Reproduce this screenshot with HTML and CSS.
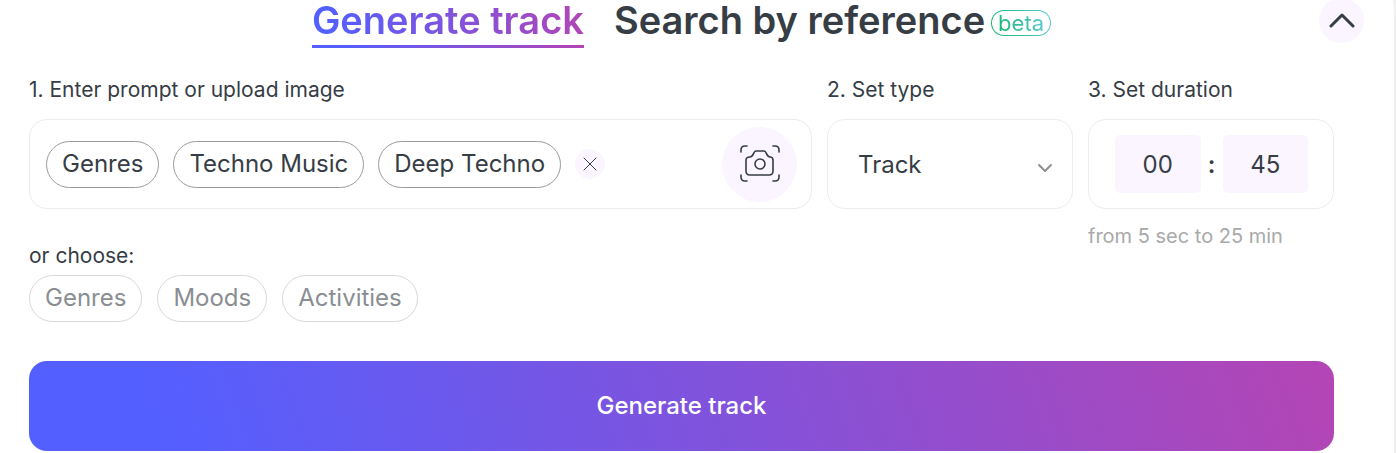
FILE: index.html
```
<!DOCTYPE html>
<html lang="en">
<head>
    <meta charset="UTF-8">
    <meta name="viewport" content="width=device-width, initial-scale=1.0">
    <title>Generate track</title>
    <link rel="stylesheet" href="styles.css">
</head>
<body>
    <main class="panel">
        <nav class="tabs">
            <a href="#generate" class="tab active">Generate track</a>
            <a href="#search" class="tab">Search by reference</a>
            <span class="beta"><span>beta</span></span>
        </nav>
        <button type="button" class="collapse" aria-label="Collapse">
            <svg width="26" height="18" viewBox="0 0 26 18"><path d="M2 14 13 3l11 11"/></svg>
        </button>

        <form>
            <div class="fields">
                <section class="field">
                    <h2 class="label">1. Enter prompt or upload image</h2>
                    <div class="box prompt">
                        <button type="button" class="chip">Genres</button>
                        <button type="button" class="chip">Techno Music</button>
                        <button type="button" class="chip">Deep Techno</button>
                        <button type="button" class="clear" aria-label="Clear">
                            <svg width="14" height="14" viewBox="0 0 14 14"><path d="M1 1l12 12M13 1 1 13"/></svg>
                        </button>
                        <button type="button" class="upload" aria-label="Upload image">
                            <svg width="40" height="38" viewBox="0 0 40 38">
                                <path d="M1 7V5q0-4 4-4h2M33 1h2q4 0 4 4v2M39 30v2q0 4-4 4h-2M7 36H5q-4 0-4-4v-2"/>
                                <path d="M10 12c4 0 3-6 6-6h8c3 0 2 6 6 6q3 0 3 3v11q0 4-4 4H10q-4 0-4-4V15q0-3 4-3z"/>
                                <circle cx="20" cy="19" r="5"/>
                            </svg>
                        </button>
                    </div>
                </section>

                <section class="field">
                    <label class="label" for="type">2. Set type</label>
                    <div class="box type">
                        <select id="type">
                            <option>Track</option>
                            <option>Loop</option>
                        </select>
                        <svg width="16" height="10" viewBox="0 0 16 10"><path d="M2 2l6 6 6-6"/></svg>
                    </div>
                </section>

                <section class="field">
                    <label class="label" for="minutes">3. Set duration</label>
                    <div class="box duration">
                        <input type="text" id="minutes" value="00">
                        <span class="colon">:</span>
                        <input type="text" id="seconds" value="45" aria-label="Seconds">
                    </div>
                </section>
            </div>

            <div class="extra">
                <div>
                    <p class="label choose">or choose:</p>
                    <div class="choices">
                        <button type="button" class="chip muted">Genres</button>
                        <button type="button" class="chip muted">Moods</button>
                        <button type="button" class="chip muted">Activities</button>
                    </div>
                </div>
                <p class="hint">from 5 sec to 25 min</p>
            </div>

            <button type="submit" class="submit">Generate track</button>
        </form>
    </main>
</body>
</html>
```
FILE: styles.css
```
* {
    box-sizing: border-box;
}
body {
    margin: 0;
    background: #f1f1f1;
    color: #363d45;
    font-family: Inter, "Liberation Sans", sans-serif;
    font-size: 24px;
}
button, input, select {
    font: inherit;
    color: inherit;
    margin: 0;
    padding: 0;
    border: 0;
}
svg {
    display: block;
    fill: none;
    stroke: #363d45;
    stroke-width: 2;
    stroke-linecap: round;
    stroke-linejoin: round;
}
.panel {
    position: relative;
    margin-right: 2px;
    padding: 0 60px 2px 29px;
    min-height: 100vh;
    background: #fff;
    border-top-right-radius: 2px 14px;
}
.tabs {
    display: flex;
    justify-content: center;
    align-items: flex-start;
    height: 48px;
}
.tab {
    height: 48px;
    margin-right: 30px;
    color: #363d45;
    font-size: 38px;
    font-weight: 600;
    line-height: 40px;
    text-decoration: none;
    white-space: nowrap;
}
.tab.active {
    color: transparent;
    background:
        linear-gradient(70deg, #535fff 10%, #b445b4) bottom / 100% 3px no-repeat,
        linear-gradient(70deg, #535fff 10%, #b445b4) text;
}
.tab:nth-child(2) {
    margin-right: 6px;
}
.beta {
    margin-top: 10px;
    padding: 0 6px;
    border: 1px solid transparent;
    border-radius: 13px;
    background:
        linear-gradient(#fff, #fff) padding-box,
        linear-gradient(70deg, #12b76a, #5cc8dc) border-box;
    font-size: 22px;
    line-height: 24px;
}
.beta span {
    color: transparent;
    background: linear-gradient(70deg, #12b76a, #5cc8dc) text;
}
.collapse {
    position: absolute;
    top: -2px;
    right: 30px;
    display: grid;
    place-items: center;
    width: 45px;
    height: 45px;
    border-radius: 50%;
    background: #faf5ff;
}
.collapse svg {
    stroke-width: 3;
}
.fields {
    display: grid;
    grid-template-columns: 1fr 246px 246px;
    gap: 15px;
    padding-top: 29px;
}
.label {
    display: block;
    margin: 0 0 17px;
    font-size: 21px;
    font-weight: 400;
    line-height: 25px;
}
.box {
    display: flex;
    align-items: center;
    height: 90px;
    border: 1px solid #ececec;
    border-radius: 18px;
}
.prompt {
    gap: 14px;
    padding: 0 14px 0 16px;
}
.chip {
    height: 47px;
    padding: 0 15px 2px;
    border: 1px solid #9b9b9b;
    border-radius: 24px;
    background: #fff;
    white-space: nowrap;
}
.chip.muted {
    color: #8a8e93;
    border-color: #d8d8d8;
}
.clear, .upload {
    display: grid;
    place-items: center;
    width: 30px;
    height: 30px;
    border-radius: 50%;
    background: #faf5ff;
}
.clear svg {
    stroke-width: 1;
}
.upload {
    width: 75px;
    height: 75px;
    margin-left: auto;
}
.upload svg {
    stroke-width: 1.6;
}
.type {
    position: relative;
}
.type select {
    width: 100%;
    height: 100%;
    padding: 0 30px;
    border-radius: 18px;
    background: none;
    appearance: none;
}
.type svg {
    position: absolute;
    top: 43px;
    right: 19px;
    stroke: #8f8f8f;
    pointer-events: none;
}
.duration {
    padding: 0 25px 0 26px;
}
.duration input {
    flex: 1;
    min-width: 0;
    height: 58px;
    border-radius: 5px;
    background: #faf5ff;
    text-align: center;
}
.colon {
    width: 22px;
    font-weight: 600;
    text-align: center;
}
.extra {
    display: grid;
    grid-template-columns: 1fr 246px;
    gap: 15px;
}
.choose {
    margin: 34px 0 7px;
}
.choices {
    display: flex;
    gap: 15px;
}
.hint {
    margin: 15px 0 0;
    color: #a9a9a9;
    font-size: 20px;
    line-height: 25px;
}
.submit {
    display: block;
    width: 100%;
    height: 90px;
    margin-top: 39px;
    padding-bottom: 2px;
    border-radius: 18px;
    background: linear-gradient(70deg, #535fff 10%, #b445b4);
    color: #fff;
    font-weight: 500;
}
```
